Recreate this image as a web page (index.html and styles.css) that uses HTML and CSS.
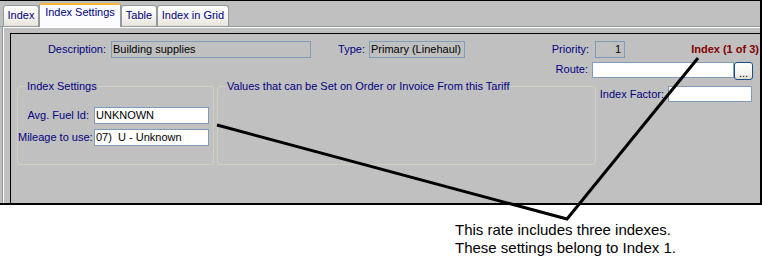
FILE: index.html
```html
<!DOCTYPE html>
<html>
<head>
<meta charset="utf-8">
<link rel="stylesheet" href="styles.css">
</head>
<body>
<div class="shot">
  <div class="frame">
    <div class="tabs">
      <div class="tab w-index">Index</div>
      <div class="tab tab-active w-settings">Index Settings</div>
      <div class="tab w-table">Table</div>
      <div class="tab w-grid">Index in Grid</div>
    </div>
    <div class="page">
      <div class="inner">
        <div class="row row-top">
          <span class="lbl lbl-desc">Description:</span>
          <span class="field ro f-desc">Building supplies</span>
          <span class="lbl lbl-type">Type:</span>
          <span class="field ro f-type">Primary (Linehaul)</span>
          <span class="lbl lbl-prio">Priority:</span>
          <span class="field ro f-prio">1</span>
          <span class="index-count">Index (1 of 3)</span>
        </div>
        <div class="row row-route">
          <span class="lbl lbl-route">Route:</span>
          <span class="field f-route"></span>
          <span class="btn">...</span>
        </div>
        <div class="row row-groups">
          <fieldset class="group g-settings">
            <legend>Index Settings</legend>
            <div class="grow first">
              <span class="lbl lbl-g">Avg. Fuel Id:</span>
              <span class="field f-g">UNKNOWN</span>
            </div>
            <div class="grow">
              <span class="lbl lbl-g">Mileage to use:</span>
              <span class="field f-g">07)&nbsp; U - Unknown</span>
            </div>
          </fieldset>
          <fieldset class="group g-values">
            <legend>Values that can be Set on Order or Invoice From this Tariff</legend>
          </fieldset>
          <div class="factor">
            <span class="lbl lbl-factor">Index Factor:</span>
            <span class="field f-factor"></span>
          </div>
        </div>
      </div>
    </div>
  </div>
  <div class="note">
    This rate includes three indexes.<br>
    These settings belong to Index 1.
  </div>
  <svg class="callout" width="762" height="260" viewBox="0 0 762 260">
    <polyline points="217,125 567,219 698,58" fill="none" stroke="#000" stroke-width="3" stroke-linejoin="miter"/>
  </svg>
</div>
</body>
</html>
```
FILE: styles.css
```css
* { box-sizing: border-box; }
html, body { margin: 0; padding: 0; background: #fff; }
body {
  font-family: "Liberation Sans", Arial, sans-serif;
  font-size: 11px;
  line-height: 13px;
}
.shot { position: relative; width: 762px; height: 260px; overflow: hidden; }

.frame {
  width: 762px;
  height: 205px;
  background: #c0c0c0;
  border-top: 1px solid #000;
  border-right: 2px solid #000;
  border-bottom: 2px solid #000;
  display: flex;
  flex-direction: column;
}

/* tabs */
.tabs {
  height: 26px;
  flex: none;
  display: flex;
  align-items: flex-end;
  padding-left: 3px;
  border-bottom: 1px solid #919b9c;
}
.tab {
  height: 21px;
  padding-top: 3px;
  text-align: center;
  color: #000080;
  border: 1px solid #919b9c;
  border-bottom: none;
  border-radius: 3px 3px 0 0;
  background: linear-gradient(#ffffff, #f4f3ee 60%, #e6e4da);
  white-space: nowrap;
}
.tab-active {
  height: 24px;
  margin-bottom: -1px;
  padding-top: 1px;
  border-top: 2px solid #f7b43a;
  border-radius: 2px 2px 0 0;
  background: #fcfcfe;
  color: #000080;
}
.w-index { width: 36px; }
.w-settings { width: 82px; }
.w-table { width: 36px; }
.w-grid { width: 72px; }

/* page */
.page {
  flex: 1;
  margin-left: 2px;
  border-left: 1px solid #919b9c;
  box-shadow: inset 1px 1px 0 #fff;
  padding: 6px 0 0 7px;
  display: flex;
}
.inner {
  flex: 1;
  border-top: 1px solid #000;
  border-left: 1px solid #000;
  padding-top: 7px;
}

.row { display: flex; }
.lbl { color: #000080; white-space: nowrap; }
.field {
  display: block;
  height: 17px;
  border: 1px solid #7f9db9;
  background: #fff;
  color: #000;
  padding: 1px 1px 0 1px;
  white-space: nowrap;
  overflow: hidden;
}
.field.ro { background: #c0c0c0; }

.row-top { height: 17px; align-items: center; padding-right: 1px; }
.lbl-desc { width: 95px; text-align: right; margin-right: 5px; }
.f-desc { width: 200px; }
.lbl-type { width: 54px; text-align: right; margin-right: 4px; }
.f-type { width: 96px; }
.lbl-prio { width: 124px; text-align: right; margin-right: 6px; }
.f-prio { width: 30px; text-align: right; padding-right: 3px; }
.index-count {
  margin-left: auto;
  color: #800000;
  font-weight: bold;
  white-space: nowrap;
}

.row-route {
  margin-top: 4px;
  height: 18px;
  justify-content: flex-end;
  align-items: flex-start;
  padding-right: 7px;
}
.lbl-route { margin-right: 4px; padding-top: 1px; }
.f-route { width: 142px; height: 16px; }
.btn {
  width: 19px;
  height: 18px;
  border: 1px solid #1c4f80;
  border-radius: 3px;
  background: linear-gradient(#ffffff, #f3f2ec 70%, #dcd9cc);
  color: #000;
  text-align: center;
  line-height: 20px;
  font-size: 11px;
}

.row-groups { padding-left: 6px; padding-right: 8px; align-items: flex-start; }
.group {
  margin: 0;
  padding: 0;
  min-width: 0;
  height: 85px;
  border: 1px solid #d2d0bc;
  border-radius: 3px;
}
.group legend {
  margin-left: 8px;
  padding: 0 1px;
  color: #000080;
  font-size: 11px;
  line-height: 13px;
  white-space: nowrap;
}
.g-settings { width: 197px; }
.g-values { width: 379px; margin-left: 3px; }

.grow { display: flex; align-items: center; margin-top: 5px; }
.grow.first { margin-top: 14px; }
.lbl-g { width: 71px; text-align: right; margin-right: 5px; }
.f-g { width: 115px; }

.factor { display: flex; align-items: center; margin-left: auto; margin-top: 6px; }
.lbl-factor { margin-right: 4px; }
.f-factor { width: 84px; height: 16px; }

.note {
  margin-top: 16px;
  padding-left: 455px;
  font-size: 15px;
  line-height: 18px;
  color: #000;
}

.callout {
  position: absolute;
  left: 0;
  top: 0;
  pointer-events: none;
}
```
